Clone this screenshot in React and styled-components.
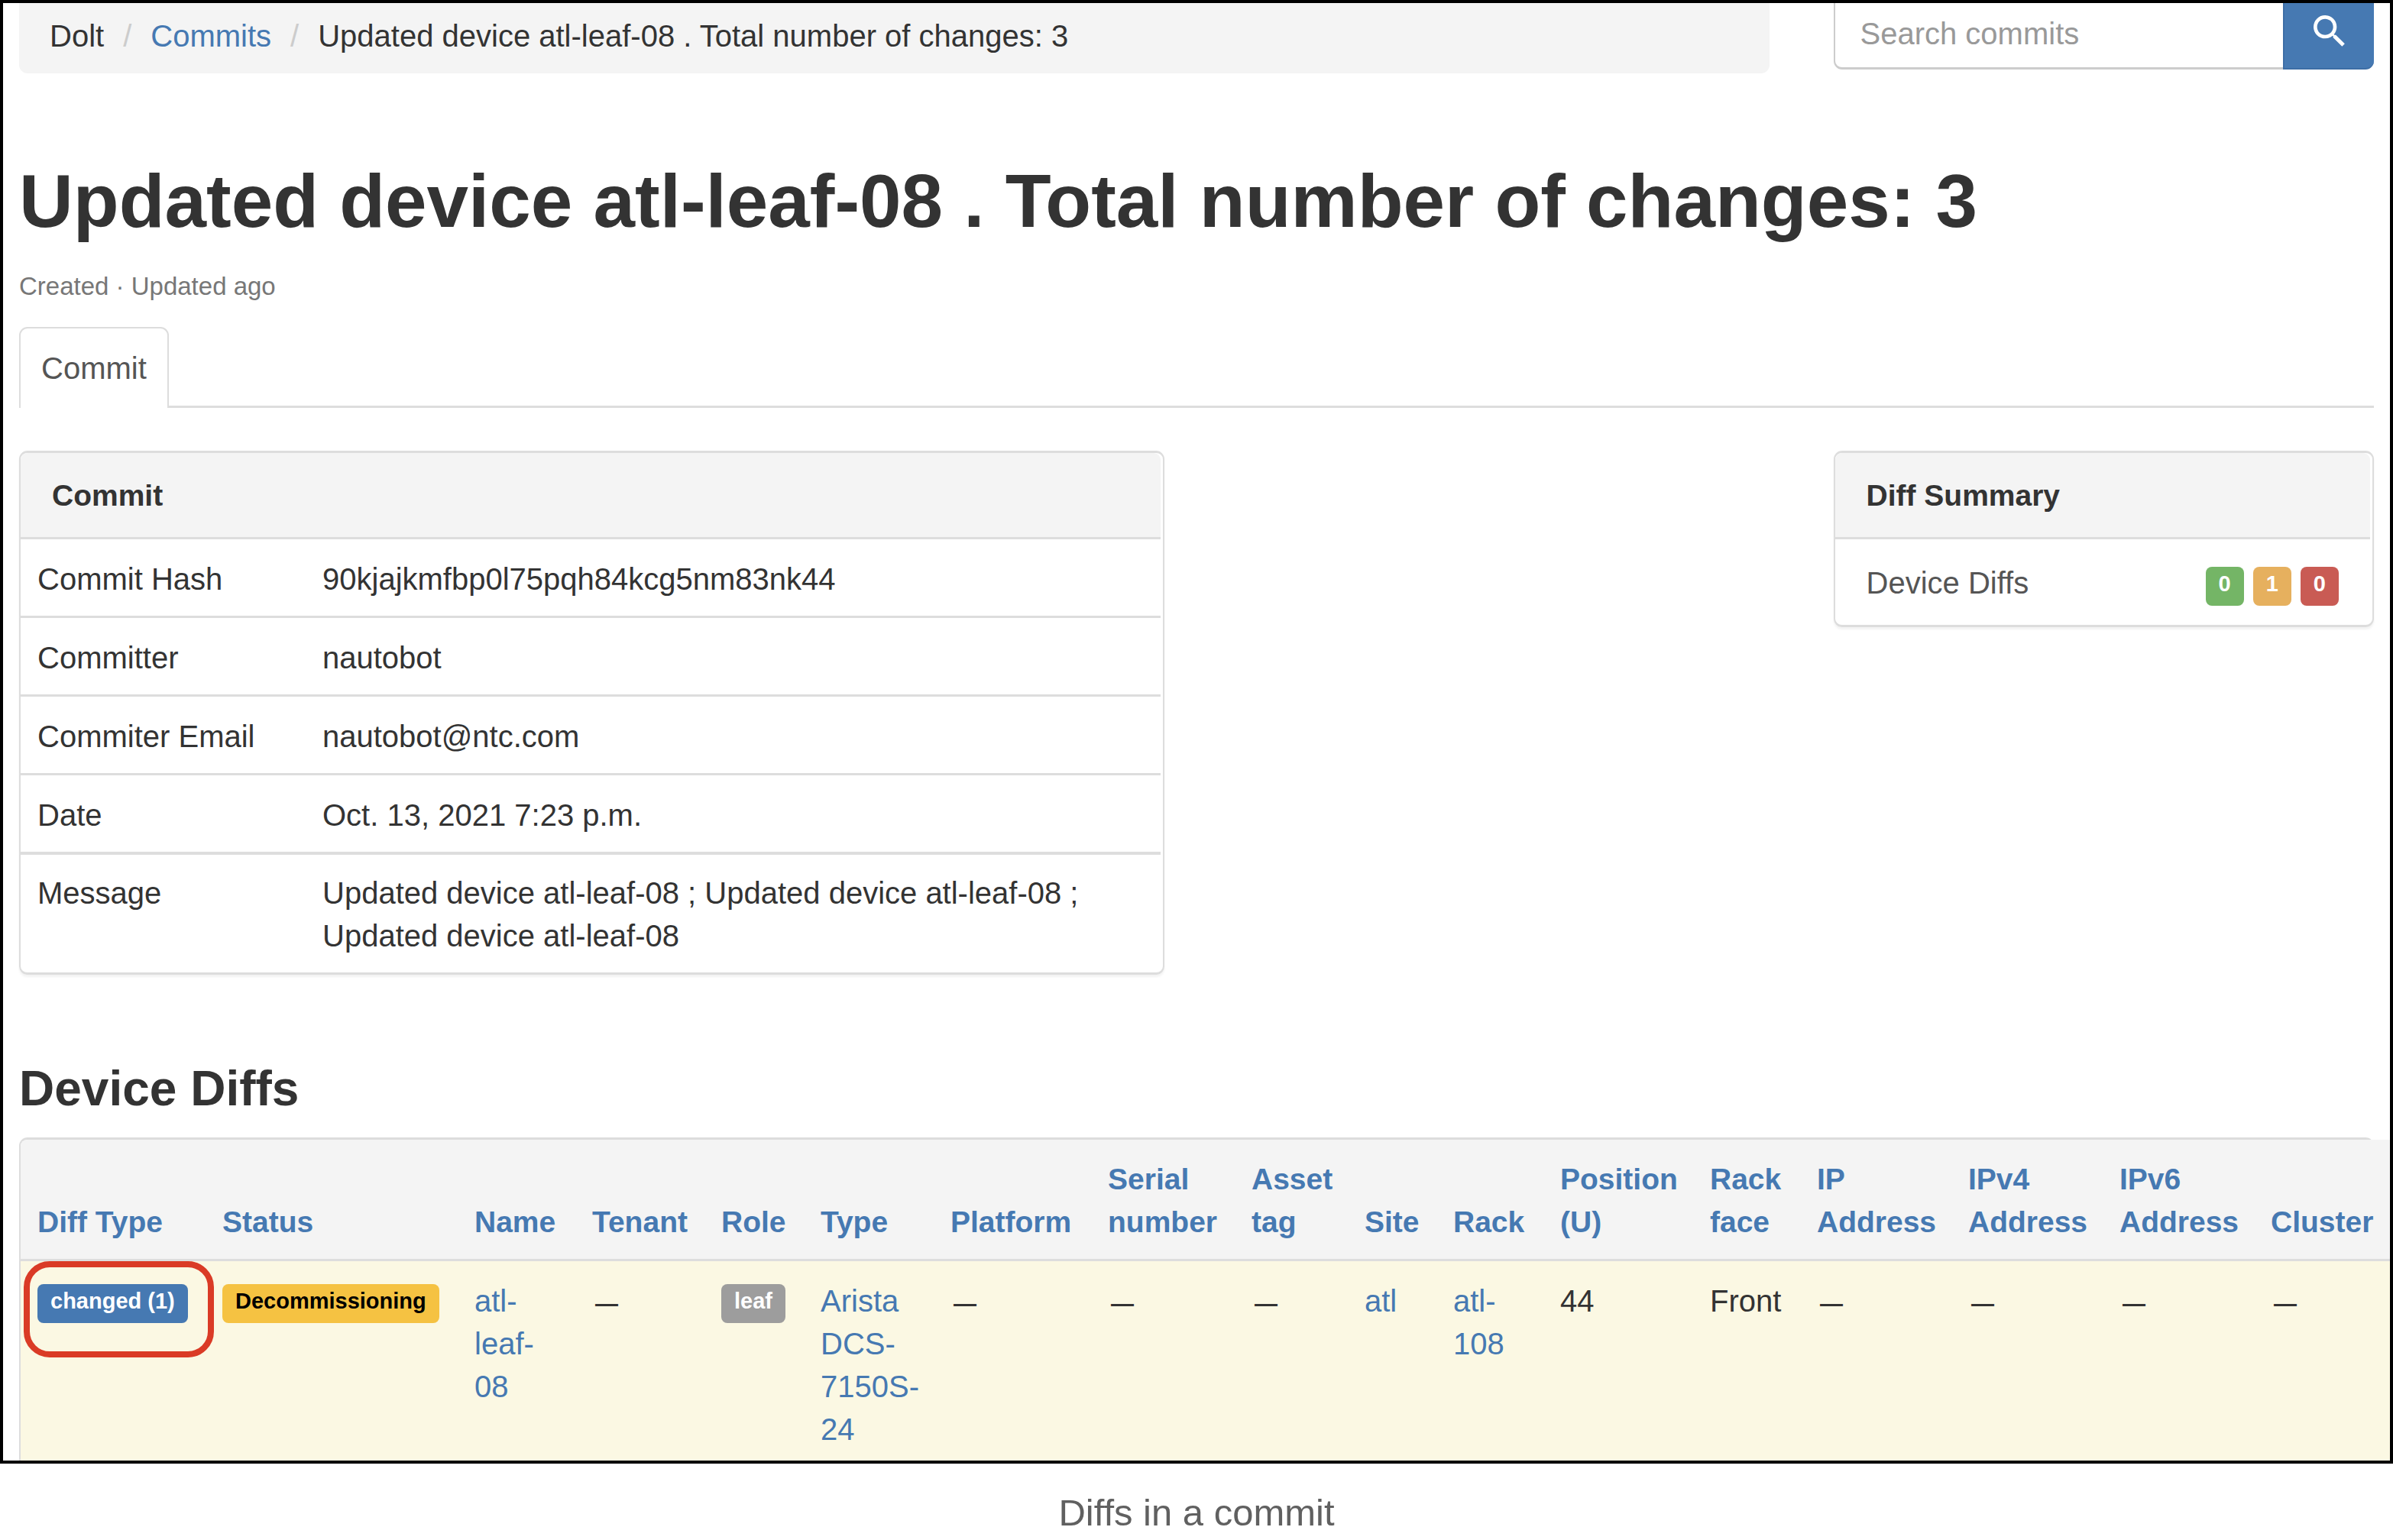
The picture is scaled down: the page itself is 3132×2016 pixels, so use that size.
import React from "react";
import styled, { createGlobalStyle, css } from "styled-components";

const color = {
  text: "#333333",
  muted: "#777777",
  link: "#4679b2",
  line: "#dddddd",
  band: "#f4f4f4",
  highlight: "#fbf8e3",
};

const GlobalStyle = createGlobalStyle`
  *, *::before, *::after { box-sizing: border-box; }
  body {
    margin: 0;
    background: #ffffff;
    color: ${color.text};
    font-family: "Liberation Sans", Arial, sans-serif;
    font-size: 40px;
    line-height: 56px;
  }
`;

const Figure = styled.figure`
  margin: 0;
`;

const Frame = styled.div`
  border: 4px solid #000000;
  padding: 0 21px;
  overflow: hidden;
`;

const Caption = styled.figcaption`
  padding: 32px 0 2px;
  text-align: center;
  font-size: 49px;
  line-height: 64px;
  color: #606060;
`;

const Grid = styled.div`
  display: grid;
  grid-template-columns: repeat(12, minmax(0, 1fr));
  column-gap: 84px;
  align-items: start;
`;

const Column = styled.div`
  grid-column: ${(p) => (p.$start ? `${p.$start} / ` : "")} span ${(p) => p.$span};
`;

const Link = styled.a`
  color: ${color.link};
  text-decoration: none;
`;

const Breadcrumb = styled.ol`
  display: flex;
  margin: 0;
  padding: 15px 40px 21px;
  list-style: none;
  background: ${color.band};
  border-radius: 0 0 11px 11px;
`;

const Crumb = styled.li`
  & + &::before {
    content: "/";
    padding: 0 25px;
    color: #cccccc;
  }
`;

const SearchForm = styled.form`
  display: flex;
  height: 87px;
`;

const SearchInput = styled.input`
  flex: 1;
  min-width: 0;
  padding: 0 33px 4px;
  border: 2px solid #cccccc;
  border-width: 0 0 3px 2px;
  border-radius: 0 0 0 11px;
  font: inherit;
  color: ${color.text};
  background: #ffffff;

  &::placeholder {
    color: #999999;
    opacity: 1;
  }
`;

const SearchButton = styled.button`
  display: flex;
  align-items: center;
  justify-content: center;
  width: 119px;
  padding: 0 0 12px;
  border: 0 solid #3d6ea6;
  border-width: 0 0 2px 2px;
  border-radius: 0 0 11px 0;
  background: ${color.link};
  color: #ffffff;
`;

const PageTitle = styled.h1`
  margin: 112px 0 0;
  font-size: 98px;
  line-height: 110px;
`;

const Timestamps = styled.p`
  margin: 33px 0 29px;
  font-size: 33px;
  line-height: 48px;
  color: ${color.muted};
`;

const Tabs = styled.ul`
  display: flex;
  margin: 0 0 56px;
  padding: 0;
  list-style: none;
  border-bottom: 3px solid ${color.line};
`;

const Tab = styled.a`
  display: block;
  margin-bottom: -3px;
  padding: 24px 27px;
  border: 2px solid ${color.line};
  border-bottom: 0;
  border-radius: 11px 11px 0 0;
  background: #ffffff;
  color: #555555;
  text-decoration: none;
`;

const Panel = styled.section`
  padding-right: 3px;
  border: 2px solid ${color.line};
  border-width: 3px 2px;
  border-radius: 11px;
  box-shadow: 0 3px 3px rgba(0, 0, 0, 0.05);
`;

const PanelHeading = styled.h2`
  margin: 0;
  padding: 28px 41px 26px;
  border-bottom: 3px solid ${color.line};
  border-radius: 9px 9px 0 0;
  background: ${color.band};
  font-size: 39px;
  line-height: 56px;
`;

const cell = css`
  padding: 24px 22px 20px;
  text-align: left;
  font-weight: normal;
`;

const DetailTable = styled.table`
  width: 100%;
  border-spacing: 0;
  table-layout: fixed;

  th,
  td {
    ${cell}
    vertical-align: top;
  }

  th {
    width: 25%;
  }

  tr + tr > * {
    border-top: 3px solid ${color.line};
  }

  tr:last-child > * {
    padding-top: 22px;
    border-top-width: 4px;
  }
`;

const SummaryRow = styled.div`
  display: flex;
  justify-content: space-between;
  align-items: flex-start;
  padding: 29px 41px 25px;
  color: #555555;
`;

const BadgeGroup = styled.div`
  display: flex;
  gap: 12px;
  padding-top: 7px;
`;

const tones = {
  green: ["#74b566", "#ffffff"],
  orange: ["#e6b05e", "#ffffff"],
  red: ["#c95b54", "#ffffff"],
  blue: [color.link, "#ffffff"],
  yellow: ["#f5c242", "#000000"],
  gray: ["#9d9d9d", "#ffffff"],
};

const Badge = styled.span`
  display: block;
  width: max-content;
  padding: 4px 17px 10px;
  border-radius: 8px;
  background: ${(p) => tones[p.$tone][0]};
  color: ${(p) => tones[p.$tone][1]};
  font-size: 29px;
  font-weight: bold;
  line-height: 37px;
  white-space: nowrap;

  td > & {
    margin-top: 6px;
  }
`;

const SectionTitle = styled.h2`
  margin: 112px 0 27px;
  font-size: 64px;
  line-height: 74px;
`;

const DiffPanel = styled.section`
  border: 2px solid ${color.line};
  border-width: 3px 2px 0;
  border-radius: 11px 11px 0 0;
`;

const DiffTable = styled.table`
  width: 100%;
  border-spacing: 0;
  table-layout: fixed;

  th {
    ${cell}
    vertical-align: bottom;
    font-size: 39px;
    font-weight: bold;
    background: ${color.band};
    border-bottom: 3px solid ${color.line};
  }

  th:first-child {
    border-top-left-radius: 9px;
  }

  td {
    ${cell}
    padding-bottom: 13px;
    vertical-align: top;
    background: ${color.highlight};
  }
`;

const Col = styled.col`
  width: ${(p) => p.$width}px;
`;

const MarkedCell = styled.td`
  position: relative;
`;

const Marker = styled.span`
  position: absolute;
  top: 0;
  left: 4px;
  right: -11px;
  height: 126px;
  border: 8px solid #da3b26;
  border-radius: 34px;
  pointer-events: none;
`;

const Dash = styled.span`
  margin-left: 4px;
  font-size: 30px;
  font-weight: bold;
`;

const details = [
  ["Commit Hash", "90kjajkmfbp0l75pqh84kcg5nm83nk44"],
  ["Committer", "nautobot"],
  ["Commiter Email", "nautobot@ntc.com"],
  ["Date", "Oct. 13, 2021 7:23 p.m."],
  ["Message", "Updated device atl-leaf-08 ; Updated device atl-leaf-08 ; Updated device atl-leaf-08"],
];

const columns = [
  ["Diff Type", 242],
  ["Status", 330],
  ["Name", 154],
  ["Tenant", 169],
  ["Role", 130],
  ["Type", 170],
  ["Platform", 206],
  ["Serial number", 188],
  ["Asset tag", 148],
  ["Site", 116],
  ["Rack", 140],
  ["Position (U)", 196],
  ["Rack face", 140],
  ["IP Address", 198],
  ["IPv4 Address", 198],
  ["IPv6 Address", 198],
  ["Cluster", 198],
];

const EmptyCell = () => (
  <td>
    <Dash>—</Dash>
  </td>
);

const LinkCell = ({ children }) => (
  <td>
    <Link href="#">{children}</Link>
  </td>
);

const SearchIcon = () => (
  <svg width="56" height="56" viewBox="0 0 24 24" fill="currentColor" aria-hidden="true">
    <path d="M9.5 3A6.5 6.5 0 0 1 16 9.5c0 1.61-.59 3.09-1.56 4.23l.27.27h.79l5 5-1.5 1.5-5-5v-.79l-.27-.27A6.52 6.52 0 0 1 9.5 16a6.5 6.5 0 0 1 0-13m0 2C7 5 5 7 5 9.5S7 14 9.5 14 14 12 14 9.5 12 5 9.5 5Z" />
  </svg>
);

export default function App() {
  return (
    <Figure>
      <GlobalStyle />
      <Frame>
        <Grid>
          <Column as="nav" $span={9} aria-label="Breadcrumb">
            <Breadcrumb>
              <Crumb>Dolt</Crumb>
              <Crumb>
                <Link href="#">Commits</Link>
              </Crumb>
              <Crumb>Updated device atl-leaf-08 . Total number of changes: 3</Crumb>
            </Breadcrumb>
          </Column>
          <Column $span={3}>
            <SearchForm role="search">
              <SearchInput type="text" placeholder="Search commits" aria-label="Search commits" />
              <SearchButton type="button" aria-label="Search">
                <SearchIcon />
              </SearchButton>
            </SearchForm>
          </Column>
        </Grid>

        <PageTitle>Updated device atl-leaf-08 . Total number of changes: 3</PageTitle>
        <Timestamps>Created · Updated ago</Timestamps>

        <Tabs>
          <li>
            <Tab href="#">Commit</Tab>
          </li>
        </Tabs>

        <Grid>
          <Column $span={6}>
            <Panel>
              <PanelHeading>Commit</PanelHeading>
              <DetailTable>
                <tbody>
                  {details.map(([label, value]) => (
                    <tr key={label}>
                      <th scope="row">{label}</th>
                      <td>{value}</td>
                    </tr>
                  ))}
                </tbody>
              </DetailTable>
            </Panel>
          </Column>
          <Column $start={10} $span={3}>
            <Panel>
              <PanelHeading>Diff Summary</PanelHeading>
              <SummaryRow>
                Device Diffs
                <BadgeGroup>
                  <Badge $tone="green">0</Badge>
                  <Badge $tone="orange">1</Badge>
                  <Badge $tone="red">0</Badge>
                </BadgeGroup>
              </SummaryRow>
            </Panel>
          </Column>
        </Grid>

        <SectionTitle>Device Diffs</SectionTitle>
        <DiffPanel>
          <DiffTable>
            <colgroup>
              {columns.map(([heading, width]) => (
                <Col key={heading} $width={width} />
              ))}
            </colgroup>
            <thead>
              <tr>
                {columns.map(([heading]) => (
                  <th key={heading} scope="col">
                    <Link href="#">{heading}</Link>
                  </th>
                ))}
              </tr>
            </thead>
            <tbody>
              <tr>
                <MarkedCell>
                  <Badge $tone="blue">changed (1)</Badge>
                  <Marker />
                </MarkedCell>
                <td>
                  <Badge $tone="yellow">Decommissioning</Badge>
                </td>
                <LinkCell>atl-leaf-08</LinkCell>
                <EmptyCell />
                <td>
                  <Badge $tone="gray">leaf</Badge>
                </td>
                <LinkCell>Arista DCS-7150S-24</LinkCell>
                <EmptyCell />
                <EmptyCell />
                <EmptyCell />
                <LinkCell>atl</LinkCell>
                <LinkCell>atl-108</LinkCell>
                <td>44</td>
                <td>Front</td>
                <EmptyCell />
                <EmptyCell />
                <EmptyCell />
                <EmptyCell />
              </tr>
            </tbody>
          </DiffTable>
        </DiffPanel>
      </Frame>
      <Caption>Diffs in a commit</Caption>
    </Figure>
  );
}
